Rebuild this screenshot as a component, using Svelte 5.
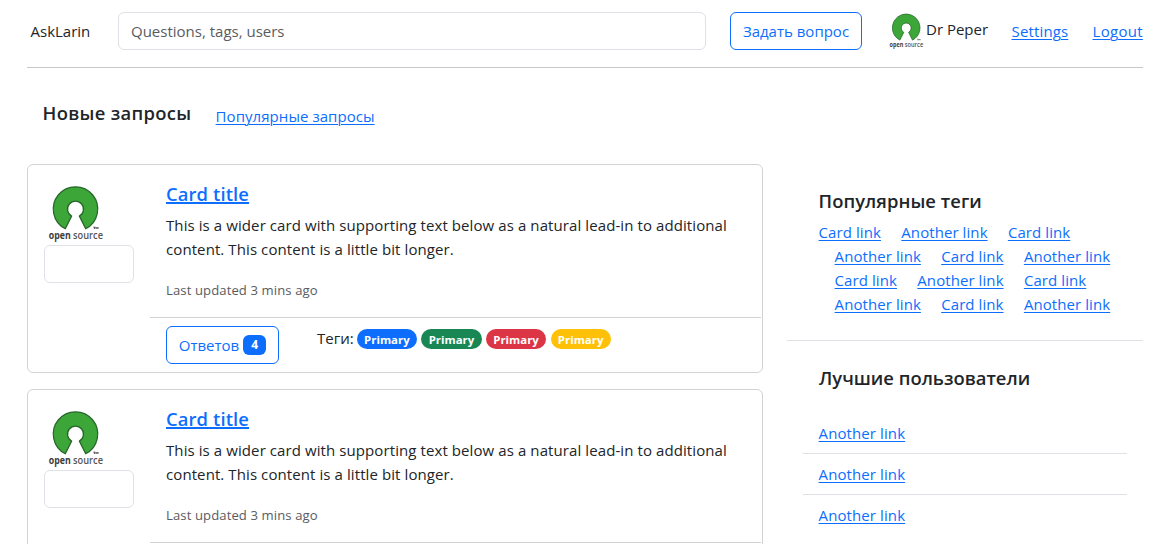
<script>
  const cards = [1, 2];
  const badges = ['blue', 'green', 'red', 'yellow'];
  const tagRows = [
    ['Card link', 'Another link', 'Card link'],
    ['Another link', 'Card link', 'Another link'],
    ['Card link', 'Another link', 'Card link'],
    ['Another link', 'Card link', 'Another link']
  ];
  const users = ['Another link', 'Another link', 'Another link'];
</script>

{#snippet logo(cls)}
  <svg class={cls} viewBox="0 0 56 58" aria-label="open source">
    <path
      d="M17.3 43.7 A22.2 22.2 0 1 1 37.7 43.7 L31.4 31.1 A8 8 0 1 0 23.6 31.1 Z"
      fill="#3da639"
      stroke="#27682a"
      stroke-width="1.3"
      stroke-linejoin="round"
    />
    <path d="M45.4 42.2h2M46.4 42.2v1.8M48 44v-1.8l1 1.2 1-1.2v1.8" stroke="#333" stroke-width=".8" fill="none" />
    <text x="0.8" y="54.2" textLength="22" lengthAdjust="spacingAndGlyphs" class="logo-open">open</text>
    <text x="25" y="54.2" textLength="30" lengthAdjust="spacingAndGlyphs" class="logo-source">source</text>
  </svg>
{/snippet}

<div class="page">
  <header>
    <span class="brand">AskLarin</span>
    <input class="search" type="text" placeholder="Questions, tags, users" />
    <button class="btn ask">Задать вопрос</button>
    <div class="user">
      {@render logo('logo-small')}
      <span>Dr Peper</span>
    </div>
    <a class="settings" href="#settings">Settings</a>
    <a class="logout" href="#logout">Logout</a>
  </header>

  <div class="heading">
    <h5 class="new">Новые запросы</h5>
    <a class="popular" href="#popular">Популярные запросы</a>
  </div>

  <div class="columns">
    <main>
      {#each cards as card (card)}
        <article>
          <div class="side">
            {@render logo('logo-big')}
            <input class="votes" type="text" />
          </div>
          <div class="content">
            <div class="body">
              <h5><a class="card-title" href="#card">Card title</a></h5>
              <p class="text">
                This is a wider card with supporting text below as a natural lead-in to additional<br />
                content. This content is a little bit longer.
              </p>
              <small>Last updated 3 mins ago</small>
            </div>
            <div class="foot">
              <button class="btn answers"><span>Ответов</span><b>4</b></button>
              <div class="tags">
                <span class="tag-label">Теги:</span>
                {#each badges as color}
                  <span class="badge {color}">Primary</span>
                {/each}
              </div>
            </div>
          </div>
        </article>
      {/each}
    </main>

    <aside>
      <section class="top-tags">
        <h5 class="tags-title">Популярные теги</h5>
        {#each tagRows as row}
          <div class="tag-row">
            {#each row as tag}
              <a class:card={tag === 'Card link'} href="#tag">{tag}</a>
            {/each}
          </div>
        {/each}
      </section>
      <section class="top-users">
        <h5 class="users-title">Лучшие пользователи</h5>
        <ul>
          {#each users as user}
            <li><a href="#user">{user}</a></li>
          {/each}
        </ul>
      </section>
    </aside>
  </div>
</div>

<style>
  :global(body) {
    margin: 0;
    overflow: hidden;
    background: #fff;
  }
  * {
    box-sizing: border-box;
  }
  .page {
    padding: 0 24px 0 27px;
    font: 15px/24px 'Open Sans', 'Noto Sans', sans-serif;
    color: #212529;
    white-space: nowrap;
  }
  a {
    color: #0d6efd;
    text-decoration: underline;
    text-decoration-thickness: 1px;
    text-underline-offset: 2px;
  }
  h5 {
    margin: 0;
    font-size: 18.4px;
    line-height: 24px;
    font-weight: 600;
  }
  h5 a {
    letter-spacing: 0.12px;
    text-decoration-thickness: 2px;
    text-underline-offset: 1px;
  }
  input {
    height: 38px;
    border: 1px solid #dee2e6;
    border-radius: 6px;
    padding: 0 12px;
    font: inherit;
    background: #fff;
    outline: none;
  }
  input::placeholder {
    color: #595c5f;
    opacity: 1;
  }
  .btn {
    height: 38px;
    border: 1px solid #0d6efd;
    border-radius: 6px;
    background: #fff;
    color: #0d6efd;
    font: inherit;
    padding: 0;
    display: flex;
    align-items: center;
    justify-content: center;
  }

  header {
    display: flex;
    align-items: center;
    height: 68px;
    padding: 0 0 5px 3.5px;
    border-bottom: 1px solid #c6c7c8;
  }
  .brand {
    width: 87.5px;
  }
  .search {
    width: 588px;
  }
  .ask {
    width: 132px;
    margin-left: 24px;
  }
  .user {
    display: flex;
    align-items: center;
    width: 123px;
    margin-left: 26.5px;
    gap: 2.5px;
  }
  .user span {
    margin-top: -4px;
  }
  .logo-small {
    width: 35px;
    height: 36px;
    overflow: visible;
  }
  .logo-big {
    width: 56px;
    height: 58px;
    margin-left: 4px;
    display: block;
    overflow: visible;
  }
  .logo-open,
  .logo-source {
    font-family: 'Open Sans', sans-serif;
    font-size: 10.8px;
    fill: #3c3c3c;
  }
  .logo-open {
    font-weight: 700;
  }
  .logo-source {
    font-weight: 600;
    fill: #555;
  }
  .settings {
    width: 81px;
    letter-spacing: 0.15px;
  }
  .logout {
    letter-spacing: 0.3px;
  }

  .heading {
    display: flex;
    align-items: flex-start;
    height: 96px;
    padding: 33px 0 0 15.6px;
  }
  .new {
    width: 173px;
    letter-spacing: 0.3px;
  }
  .popular {
    margin-top: 3px;
    letter-spacing: 0.06px;
  }

  .columns {
    display: grid;
    grid-template-columns: 736px 356px;
    column-gap: 24px;
  }
  main {
    display: flex;
    flex-direction: column;
    gap: 16px;
  }
  article {
    display: flex;
    height: 209px;
    border: 1px solid #d3d3d4;
    border-radius: 6px;
  }
  .side {
    width: 122px;
    padding: 20px 16px 0;
  }
  .votes {
    display: block;
    width: 90px;
    margin-top: 2px;
  }
  .content {
    flex: 1;
    margin-right: 1px;
  }
  .body {
    height: 153px;
    padding: 17px 16px 0;
    border-bottom: 1px solid #d3d3d4;
  }
  .text {
    margin: 7px 0 17px;
    letter-spacing: 0.09px;
  }
  small {
    display: block;
    font-size: 13.1px;
    letter-spacing: 0.1px;
    color: #595c5f;
  }
  .foot {
    display: flex;
    align-items: flex-start;
    padding: 8px 16px;
  }
  .answers {
    width: 113px;
    gap: 4px;
  }
  .answers b {
    width: 23px;
    height: 20px;
    border-radius: 6px;
    background: #0d6efd;
    color: #fff;
    font-size: 12px;
    line-height: 20px;
  }
  .tags {
    display: flex;
    align-items: center;
    margin: 0 0 0 38px;
    gap: 4.4px;
  }
  .tag-label {
    width: 35.4px;
  }
  .badge {
    width: 60.2px;
    height: 20px;
    margin-top: 1px;
    border-radius: 10px;
    color: #fff;
    text-align: center;
    font-size: 11.4px;
    font-weight: 700;
    line-height: 21px;
  }
  .blue { background: #0d6efd; }
  .green { background: #198754; }
  .red { background: #dc3545; }
  .yellow { background: #ffc107; }

  .top-tags {
    height: 177px;
    padding: 25px 31.6px 0;
    border-bottom: 1px solid #dee2e6;
  }
  .tags-title {
    margin-bottom: 7px;
    letter-spacing: 0.05px;
  }
  .tag-row {
    display: flex;
    gap: 20px;
    padding-left: 16px;
  }
  .tag-row:nth-of-type(1) {
    padding-left: 0;
  }
  .tag-row a {
    width: 86.6px;
    letter-spacing: 0.08px;
  }
  .tag-row a.card {
    width: 62.7px;
  }
  .top-users {
    padding: 25px 16px 0;
  }
  .users-title {
    padding-left: 16px;
  }
  ul {
    list-style: none;
    margin: 23px 0 0;
    padding: 0;
  }
  li {
    height: 41px;
    padding: 8px 15.6px;
    border-bottom: 1px solid #dee2e6;
    letter-spacing: 0.1px;
  }
  li:last-child {
    border-bottom: 0;
  }
</style>
